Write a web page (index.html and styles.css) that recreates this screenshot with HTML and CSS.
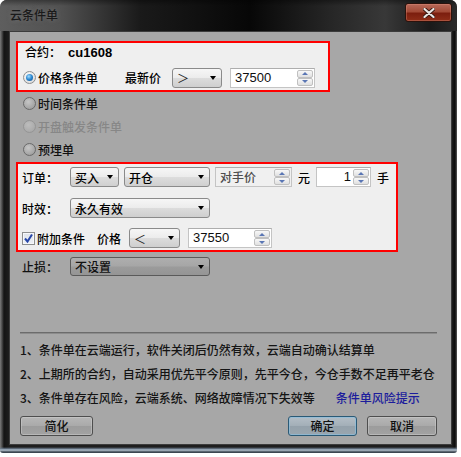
FILE: index.html
```html
<!DOCTYPE html>
<html lang="zh-CN">
<head>
<meta charset="utf-8">
<title>云条件单</title>
<link rel="stylesheet" href="styles.css">
</head>
<body>
<div class="window">
  <div class="titlebar">
    <span class="title">云条件单</span>
    <div class="close">
      <svg width="12" height="10" viewBox="0 0 12 10"><path d="M1.5 1 L10.5 9 M10.5 1 L1.5 9" stroke="#3a1a12" stroke-width="4" stroke-linecap="round"/><path d="M1.5 1 L10.5 9 M10.5 1 L1.5 9" stroke="#e8e4e2" stroke-width="2.2" stroke-linecap="round"/></svg>
    </div>
  </div>
  <div class="client">
    <div class="box box1">
      <div class="row r-contract"><span class="lbl-c">合约：</span><b class="code">cu1608</b></div>
      <div class="row r-price">
        <span class="radio on"></span><span class="rtext">价格条件单</span>
        <span class="latest">最新价</span>
        <div class="sel w50 ml11"><span class="op">＞</span><i class="arr"></i></div>
        <div class="spin w85 ml8"><span class="val">37500</span><span class="btns"><i class="up"></i><i class="dn"></i></span></div>
      </div>
    </div>
    <div class="radios">
      <div class="rrow"><span class="radio dim"></span><span class="rtext">时间条件单</span></div>
      <div class="rrow disabled"><span class="radio dis"></span><span class="rtext">开盘触发条件单</span></div>
      <div class="rrow"><span class="radio dim"></span><span class="rtext">预埋单</span></div>
    </div>
    <div class="box box2">
      <div class="row frow">
        <span class="lbl">订单：</span>
        <div class="sel w49"><span>买入</span><i class="arr"></i></div>
        <div class="sel w86 ml5"><span>开仓</span><i class="arr"></i></div>
        <div class="spin w77 ml5 disabled-spin"><span class="val cjk">对手价</span><span class="btns"><i class="up"></i><i class="dn"></i></span></div>
        <span class="unit">元</span>
        <div class="spin w55 ml6"><span class="val right">1</span><span class="btns"><i class="up"></i><i class="dn"></i></span></div>
        <span class="unit">手</span>
      </div>
      <div class="row frow r2">
        <span class="lbl">时效：</span>
        <div class="sel w140"><span>永久有效</span><i class="arr"></i></div>
      </div>
      <div class="row frow r3">
        <span class="check"><svg width="11" height="11" viewBox="0 0 11 11"><path d="M2 5.5 L4.5 8.5 L9 1.5" fill="none" stroke="#2746a8" stroke-width="2"/></svg></span>
        <span class="ctext">附加条件</span>
        <span class="ptext">价格</span>
        <div class="sel w51 ml8"><span class="op">＜</span><i class="arr"></i></div>
        <div class="spin w84 ml8"><span class="val">37550</span><span class="btns"><i class="up"></i><i class="dn"></i></span></div>
      </div>
    </div>
    <div class="row stop">
      <span class="lbl">止损：</span>
      <div class="sel sel-dim w140"><span>不设置</span><i class="arr"></i></div>
    </div>
    <div class="sep"></div>
    <div class="notes">
      <p>1、条件单在云端运行，软件关闭后仍然有效，云端自动确认结算单</p>
      <p>2、上期所的合约，自动采用优先平今原则，先平今仓，今仓手数不足再平老仓</p>
      <p>3、条件单存在风险，云端系统、网络故障情况下失效等<a class="link">条件单风险提示</a></p>
    </div>
    <div class="buttons">
      <span class="btn w73">简化</span>
      <span class="btn btn-default w69">确定</span>
      <span class="btn w70 ml10">取消</span>
    </div>
  </div>
</div>
</body>
</html>
```
FILE: styles.css
```css
* { box-sizing: border-box; }
html, body { margin: 0; padding: 0; background: #ffffff; }
body {
  font-family: "Noto Sans CJK SC", "Noto Sans", sans-serif;
  font-size: 12px;
  font-weight: 500;
  color: #111;
}

.window {
  width: 457px;
  height: 453px;
  border-radius: 7px 7px 3px 3px;
  overflow: hidden;
  display: flex;
  flex-direction: column;
  background:
    linear-gradient(180deg, rgba(0,0,0,0) 447px, #6d7e90 449px, #b9c6d2 450px, #3c4650 452px),
    linear-gradient(90deg, #7c7c7c 0, #4a4a4a 2px, #141414 4px, #1e1e1e 9px, #1e1e1e 452px, #0c0c0c 455px, #5a5a5a 457px);
}

/* title bar */
.titlebar {
  height: 31px;
  flex: none;
  display: flex;
  align-items: flex-start;
  background:
    linear-gradient(180deg, rgba(0,0,0,0.35) 0, rgba(0,0,0,0) 6px),
    linear-gradient(90deg, #5e5e5e 0, #525252 60px, #1a1a1a 140px, #070707 250px, #262626 330px, #383838 385px, #1a1a1a 430px, #2a2a2a 457px);
}
.title {
  margin: 7px 0 0 10px;
  line-height: 16px;
  color: #1a1a1a;
  text-shadow: 0 0 4px rgba(120,120,120,0.8);
}
.close {
  margin: 3px 5px 0 auto;
  width: 47px;
  height: 19px;
  border: 1px solid #2a120c;
  border-radius: 3px;
  box-shadow: inset 0 0 0 1px rgba(230,150,130,0.35);
  background: linear-gradient(180deg, #b86a5a 0, #a24a36 45%, #7c1e0e 55%, #8e2e18 100%);
  display: flex;
  align-items: center;
  justify-content: center;
}

/* client */
.client {
  margin: 0 5px 0 9px;
  width: 443px;
  height: 414px;
  flex: none;
  border: 1px solid #3c3c3c;
  background: #a7a7a7;
  padding: 9px 14px 8px 6px;
  display: flex;
  flex-direction: column;
}

.row { display: flex; align-items: center; }

.box {
  border: 2px solid #ff0000;
  background: #efefef;
}
.box1 {
  width: 314px;
  padding: 1px 0 2px 5px;
}
.r-contract { height: 16px; }
.lbl-c { margin-left: 2px; line-height: 16px; color: #000; }
.code {
  margin-left: 7px;
  font-family: "Liberation Sans", Arial, sans-serif;
  font-size: 13px;
  font-weight: bold;
  color: #000;
}
.r-price { height: 21px; margin-top: 7px; }
.rtext { margin-left: 2px; color: #000; line-height: 16px; }
.latest { margin-left: 27px; color: #000; }

/* radio buttons */
.radio {
  width: 13px;
  height: 13px;
  flex: none;
  border-radius: 50%;
  border: 1px solid #8e8f8f;
  background: radial-gradient(circle at 40% 35%, #ffffff 0, #e4e4e4 60%, #cfcfcf 100%);
  display: flex;
  align-items: center;
  justify-content: center;
}
.radio.on::after {
  content: "";
  width: 7px;
  height: 7px;
  border-radius: 50%;
  background: radial-gradient(circle at 40% 35%, #9fdcff 0, #2a86cf 50%, #0e4a86 100%);
}
.radio.dim {
  border-color: #6a6a6a;
  background: radial-gradient(circle at 40% 35%, #c6c6c6 0, #a8a8a8 60%, #959595 100%);
}
.radio.dis {
  border-color: #959595;
  background: radial-gradient(circle at 40% 35%, #bdbdbd 0, #adadad 60%, #a2a2a2 100%);
}

.radios {
  padding: 0 0 1px 7px;
}
.rrow {
  height: 23px;
  display: flex;
  align-items: center;
}
.rrow .rtext { color: #111; }
.rrow.disabled .rtext { color: #878787; }

/* box 2 */
.box2 {
  width: 382px;
  padding: 3px 4px 2px 4px;
}
.frow { height: 20px; }
.frow.r2 { margin-top: 11px; }
.frow.r3 { margin-top: 10px; }
.lbl { width: 48px; flex: none; color: #000; }
.unit { margin-left: 6px; width: 12px; color: #000; }

.check {
  width: 13px;
  height: 13px;
  flex: none;
  border: 1px solid #8e8f8f;
  background: linear-gradient(180deg, #dfe3ea, #eef1f6);
  box-shadow: inset 0 0 0 1px #f6f7fa;
  display: flex;
  align-items: center;
  justify-content: center;
}
.ctext { margin-left: 2px; color: #000; }
.ptext { margin-left: 12px; color: #000; }

/* selects */
.sel {
  height: 20px;
  flex: none;
  display: flex;
  align-items: center;
  justify-content: space-between;
  padding: 0 5px 0 4px;
  border: 1px solid #8a8a8a;
  border-radius: 3px;
  background: linear-gradient(180deg, #f6f6f6 0, #ececec 48%, #dcdcdc 52%, #cfcfcf 100%);
  color: #000;
}
.sel .op { font-size: 12px; font-weight: 400; color: #222; }
.arr {
  width: 0;
  height: 0;
  border-left: 3.5px solid transparent;
  border-right: 3.5px solid transparent;
  border-top: 4px solid #000;
}
.sel-dim {
  height: 19px;
  border-color: #5a5a5a;
  background: linear-gradient(180deg, #aeaeae 0, #a6a6a6 48%, #9b9b9b 52%, #959595 100%);
  color: #111;
}

/* spin boxes */
.spin {
  height: 20px;
  flex: none;
  display: flex;
  align-items: stretch;
  border: 1px solid #c4c4c4;
  border-top-color: #adadad;
  background: #ffffff;
  padding: 1px;
}
.spin .val {
  flex: 1;
  padding-left: 3px;
  font-family: "Liberation Sans", Arial, sans-serif;
  font-size: 13px;
  font-weight: 400;
  line-height: 16px;
  color: #0e0e0e;
}
.spin .val.right { text-align: right; padding-right: 2px; }
.spin .val.cjk {
  font-family: "Noto Sans CJK SC", sans-serif;
  font-size: 12px;
  font-weight: 500;
  color: #4e4e4e;
}
.disabled-spin { background: #f0f0f0; }
.btns {
  width: 16px;
  flex: none;
  display: flex;
  flex-direction: column;
}
.btns i {
  flex: 1;
  border: 1px solid #c0c0c0;
  border-radius: 2px;
  background: linear-gradient(180deg, #f8f8f8, #e0e0e0);
  display: flex;
  align-items: center;
  justify-content: center;
}
.btns i::after {
  content: "";
  width: 0;
  height: 0;
  border-left: 3px solid transparent;
  border-right: 3px solid transparent;
}
.btns i.up::after { border-bottom: 3px solid #5a76b4; }
.btns i.dn::after { border-top: 3px solid #5a76b4; }

/* widths / margins */
.w49 { width: 49px; }
.w50 { width: 50px; }
.w51 { width: 51px; }
.w55 { width: 55px; }
.w77 { width: 77px; }
.w84 { width: 84px; }
.w85 { width: 85px; }
.w86 { width: 86px; }
.w140 { width: 140px; }
.w69 { width: 69px; }
.w70 { width: 70px; }
.w73 { width: 73px; }
.ml5 { margin-left: 5px; }
.ml6 { margin-left: 6px; }
.ml8 { margin-left: 8px; }
.ml10 { margin-left: 10px; }
.ml11 { margin-left: 11px; }

/* stop loss row */
.stop {
  margin-top: 5px;
  padding-left: 6px;
  height: 19px;
}
.stop .lbl { color: #111; }

/* separator + notes */
.sep {
  margin: auto 0 4px 4px;
  height: 2px;
  border-top: 1px solid #6c6c6c;
  border-bottom: 1px solid #8c8c8c;
}
.notes { padding-left: 4px; }
.notes p {
  margin: 0;
  height: 24px;
  line-height: 24px;
  white-space: nowrap;
  color: #141414;
}
.link {
  margin-left: 21px;
  color: #1c1c9c;
}

/* buttons */
.buttons {
  margin-top: 6px;
  padding-left: 4px;
  height: 20px;
  display: flex;
}
.btn {
  height: 20px;
  border: 1px solid #4e4e4e;
  border-radius: 3px;
  box-shadow: inset 0 0 0 1px rgba(210,210,210,0.45);
  background: linear-gradient(180deg, #b6b6b6 0, #aaaaaa 48%, #9c9c9c 52%, #a2a2a2 100%);
  display: flex;
  align-items: center;
  justify-content: center;
  color: #111;
  line-height: 16px;
}
.btn-default {
  margin-left: auto;
  border-color: #2b5a76;
  box-shadow: inset 0 0 0 1px rgba(140,190,220,0.7);
  background: linear-gradient(180deg, #b4bec6 0, #a3afb8 48%, #94a1ab 52%, #9aa6af 100%);
}
```
